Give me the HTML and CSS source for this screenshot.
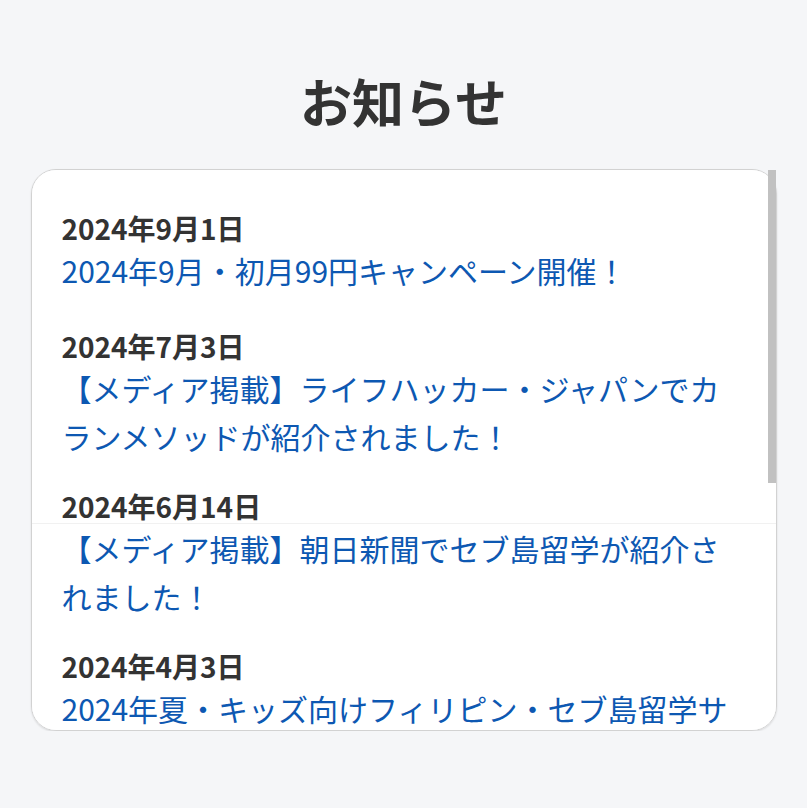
FILE: index.html
```html
<!DOCTYPE html>
<html lang="ja">
<head>
    <meta charset="utf-8">
    <title>お知らせ</title>
    <link rel="stylesheet" href="styles.css">
</head>
<body>
    <div class="container">
        <h2 class="heading">お知らせ</h2>
        <div class="news-wrap">
            <ul class="news" id="news">
                <li class="item">
                    <span class="date">2024年9月1日</span>
                    <a class="title" href="#">2024年9月・初月99円キャンペーン開催！</a>
                </li>
                <li class="item">
                    <span class="date">2024年7月3日</span>
                    <a class="title" href="#">【メディア掲載】ライフハッカー・ジャパンでカランメソッドが紹介されました！</a>
                </li>
                <li class="item">
                    <span class="date">2024年6月14日</span>
                    <a class="title" href="#">【メディア掲載】朝日新聞でセブ島留学が紹介されました！</a>
                </li>
                <li class="item">
                    <span class="date">2024年4月3日</span>
                    <a class="title" href="#">2024年夏・キッズ向けフィリピン・セブ島留学サマーキャンプ開催！</a>
                </li>
                <li class="item">
                    <span class="date">2024年3月1日</span>
                    <a class="title" href="#">2024年春・オンライン英会話新コース開講のお知らせ</a>
                </li>
                <li class="item">
                    <span class="date">2024年1月10日</span>
                    <a class="title" href="#">年末年始休業のお知らせ</a>
                </li>
            </ul>
            <div class="seam"></div>
            <div class="thumb"></div>
        </div>
    </div>
</body>
</html>
```

FILE: styles.css
```css
body {
    margin: 0;
    padding: 0;
    background-color: #f5f6f8;
    font-family: "Noto Sans CJK JP", "Noto Sans", sans-serif;
}

.container {
    width: 746px;
    margin: 0 auto;
    padding-top: 62px;
}

.heading {
    margin: 0 0 30px;
    text-align: center;
    font-size: 52px;
    font-weight: 700;
    line-height: 77px;
    color: #333;
}

.news-wrap {
    position: relative;
}

.news {
    list-style: none;
    margin: 0;
    padding: 40px 38px 30px 30px;
    height: 490px;
    overflow-y: scroll;
    scrollbar-width: none;
    background-color: #fff;
    border: 1px solid #d2d2d2;
    border-radius: 25px;
    box-shadow: 0 1px 2px rgba(0, 0, 0, 0.12);
}

.news::-webkit-scrollbar {
    display: none;
}

.item {
    margin-bottom: 28px;
}

.item:first-child {
    margin-bottom: 34px;
}

.date {
    display: block;
    font-size: 28px;
    font-weight: 700;
    line-height: 36px;
    color: #333;
}

.title {
    display: block;
    font-size: 30px;
    line-height: 48px;
    color: #0d58b2;
    text-decoration: none;
}

.seam {
    position: absolute;
    left: 1px;
    right: 1px;
    top: 354px;
    height: 1px;
    background-color: #f1f1f1;
}

.thumb {
    position: absolute;
    top: 1px;
    right: 1px;
    width: 8px;
    height: 313px;
    background-color: #c1c1c1;
}
```
